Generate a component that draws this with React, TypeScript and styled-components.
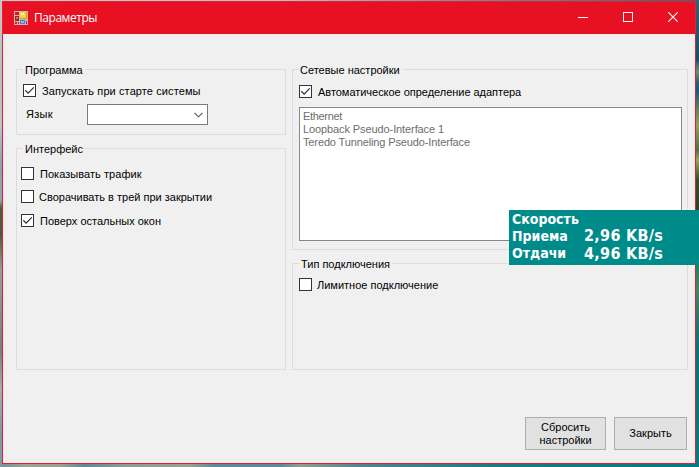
import React from 'react';
import styled, { createGlobalStyle } from 'styled-components';

const GlobalStyle = createGlobalStyle`
  * { box-sizing: border-box; }
  body { margin: 0; overflow: hidden; }
`;

const Desktop = styled.div`
  position: relative;
  width: 699px;
  height: 467px;
  padding: 1px 0 0 2px;
  overflow: hidden;
  font: 11px/13px "Liberation Sans", Arial, sans-serif;
  color: #000;
  background:
    linear-gradient(180deg, #2d6577 0, #12506c 60px, #4a6e75 65px, #6d8a78 72px, #315f6c 82px,
      #155a80 90px, #6a8060 110px, #93a05f 125px, #537048 150px, #9aa35c 160px, #354d2c 180px,
      #28432a 210px, #267f5f 265px, #438568 290px, #237770 320px, #00777c 350px, #007d80 467px)
      100% 0 / 3px 467px no-repeat,
    linear-gradient(180deg, #c3c7c6 0, #b9bec1 80px, #bec4c8 125px, #8e9eb3 165px, #97a4ae 200px,
      #4e5c36 208px, #55573b 235px, #9c9b9b 270px, #777f83 350px, #a8acb3 390px, #7f98a8 430px, #7f9aa5 467px)
      0 0 / 2px 467px no-repeat,
    linear-gradient(90deg, #c7cbca 0, #b9bfbf 280px, #77898a 480px, #386572 699px) 0 0 / 699px 1px no-repeat,
    linear-gradient(90deg, #71929c 0, #9aa493 25px, #9aa391 60px, #5d8a96 85px, #8a9e96 125px,
      #98a290 190px, #5b8b9a 215px, #5b8b9a 280px, #8f9f91 300px, #50858d 360px, #177c80 500px, #007d80 699px)
      0 100% / 699px 3px no-repeat;
`;

const Window = styled.main`
  display: flex;
  flex-direction: column;
  width: 694px;
  height: 463px;
  border: 1px solid #e81f33;
  background: #f0f0f0;
`;

const TitleBar = styled.header`
  display: flex;
  align-items: center;
  flex: none;
  height: 32px;
  padding-left: 11px;
  background: #e81123;
  color: #fff;
`;

const Title = styled.h1`
  margin: 0 auto 0 6px;
  font: 400 12px/16px "Open Sans", "Noto Sans", sans-serif;
  letter-spacing: -0.45px;
`;

const CaptionButton = styled.button`
  display: flex;
  align-items: center;
  justify-content: center;
  width: 45px;
  height: 32px;
  padding: 0 0 2px;
  border: 0;
  background: none;
`;

const Columns = styled.div`
  display: flex;
  gap: 6px;
  padding: 35px 7px 0 13px;
`;

const Column = styled.div<{ $width: number }>`
  display: flex;
  flex-direction: column;
  gap: 13px;
  width: ${p => p.$width}px;
`;

const Group = styled.section<{ $height: number }>`
  height: ${p => p.$height}px;
  border: 1px solid #dcdcdc;
`;

const Legend = styled.h2<{ $width: number; $indent?: number }>`
  width: ${p => p.$width}px;
  height: 13px;
  margin: -6px 0 0 6px;
  padding-left: ${p => p.$indent ?? 2}px;
  background: #f0f0f0;
  font: inherit;
  white-space: nowrap;
`;

const Options = styled.div<{ $top: number; $left: number }>`
  display: flex;
  flex-direction: column;
  gap: 10px;
  padding: ${p => p.$top}px 0 0 ${p => p.$left}px;
`;

const Option = styled.label<{ $gap?: number; $drop?: number; $track?: number }>`
  display: flex;
  gap: ${p => p.$gap ?? 5}px;
  height: 13px;
  margin-top: ${p => p.$drop ?? 0}px;
  line-height: 15px;
  letter-spacing: ${p => p.$track ?? 0}px;
  white-space: nowrap;
`;

const Box = styled.span`
  display: block;
  flex: none;
  width: 13px;
  height: 13px;
  border: 1px solid #333;
  background: #fff;

  svg { display: block; }
`;

const LanguageRow = styled.div`
  display: flex;
  align-items: center;
  height: 21px;
  margin: 7px 0 0 9px;
`;

const LanguageLabel = styled.span`
  width: 61px;
  letter-spacing: 0.3px;
`;

const Combo = styled.div`
  display: flex;
  align-items: center;
  justify-content: flex-end;
  width: 121px;
  height: 21px;
  padding-right: 4px;
  border: 1px solid #7a7a7a;
  background: #fff;
`;

const AdapterList = styled.ul`
  width: 383px;
  height: 134px;
  margin: 9px 0 0 6px;
  padding: 2px 3px;
  border: 1px solid #828790;
  background: #fff;
  color: #6d6d6d;
  list-style: none;
`;

const Adapter = styled.li<{ $track: number }>`
  height: 13px;
  letter-spacing: ${p => p.$track}px;
`;

const Footer = styled.footer`
  display: flex;
  justify-content: flex-end;
  gap: 8px;
  margin: auto 8px 13px 0;
`;

const PushButton = styled.button<{ $width: number }>`
  width: ${p => p.$width}px;
  height: 33px;
  padding: 0;
  border: 1px solid #adadad;
  background: #e1e1e1;
  color: #000;
  font: inherit;
`;

const SpeedOverlay = styled.aside`
  position: absolute;
  left: 509px;
  top: 210px;
  display: flex;
  width: 190px;
  height: 55px;
  padding-left: 3px;
  background: #008b8b;
  color: #fff;
  font: 700 14px/17px "DejaVu Sans Condensed", "DejaVu Sans", sans-serif;
  font-stretch: condensed;
  white-space: nowrap;
`;

const SpeedLabels = styled.div`
  display: flex;
  flex-direction: column;
  width: 72px;
  padding-top: 1px;
`;

const SpeedValues = styled.div`
  display: flex;
  flex-direction: column;
  padding-top: 17px;
  font-size: 16px;
  line-height: 18px;
  letter-spacing: 0.3px;
`;

function AppIcon() {
  return (
    <svg width="14" height="14" viewBox="0 0 14 14" shapeRendering="crispEdges" aria-hidden="true">
      <path fill="#c9b8b0" d="M0 0h14v14H0z" />
      <path fill="#e81123" d="M1 1h4v3H1zM1 11h2v2H1zM4 11h1v2H4zM12 10h1v3h-1z" />
      <path fill="#a3241c" d="M1 5h4v5H1z" />
      <path fill="#d9705f" d="M2 6h2v2H2z" />
      <path fill="#d3a21c" d="M6 1h7v7H6z" />
      <path fill="#f7cf45" d="M6 1h6v6H6z" />
      <path fill="#fff0a0" d="M7 2h3v2H7z" />
      <path fill="#4a80d6" d="M6 9h5v4H6z" />
      <path fill="#89b8ff" d="M7 10h3v2H7z" />
    </svg>
  );
}

interface CheckProps {
  label: string;
  checked?: boolean;
  gap?: number;
  drop?: number;
  track?: number;
}

function Check({ label, checked, gap, drop, track }: CheckProps) {
  return (
    <Option $gap={gap} $drop={drop} $track={track}>
      <Box role="checkbox" aria-checked={!!checked}>
        {checked && (
          <svg width="11" height="11" viewBox="0 0 11 11" aria-hidden="true">
            <path d="M1.3 5.3 4.1 8.1 9.8 2.4" fill="none" stroke="#333" strokeWidth="1.25" />
          </svg>
        )}
      </Box>
      {label}
    </Option>
  );
}

export default function App() {
  return (
    <Desktop>
      <GlobalStyle />
      <Window>
        <TitleBar>
          <AppIcon />
          <Title>Параметры</Title>
          <CaptionButton aria-label="Свернуть">
            <svg width="10" height="10" shapeRendering="crispEdges"><path d="M0 5.5h10" stroke="#fff" /></svg>
          </CaptionButton>
          <CaptionButton aria-label="Развернуть">
            <svg width="10" height="10" shapeRendering="crispEdges">
              <path d="M.5.5h9v9h-9z" fill="none" stroke="#fff" />
            </svg>
          </CaptionButton>
          <CaptionButton aria-label="Закрыть">
            <svg width="10" height="10"><path d="M.3.3l9.4 9.4M9.7.3.3 9.7" stroke="#fff" strokeWidth="1.1" /></svg>
          </CaptionButton>
        </TitleBar>
        <Columns>
          <Column $width={270}>
            <Group $height={66}>
              <Legend $width={63}>Программа</Legend>
              <Options $top={7} $left={6}>
                <Check checked gap={6} track={0.1} label="Запускать при старте системы" />
              </Options>
              <LanguageRow>
                <LanguageLabel>Язык</LanguageLabel>
                <Combo role="combobox">
                  <svg width="9" height="6" viewBox="0 0 9 6">
                    <path d="M.5.8 4.5 4.8 8.5.8" fill="none" stroke="#555" strokeWidth="1.1" />
                  </svg>
                </Combo>
              </LanguageRow>
            </Group>
            <Group $height={222}>
              <Legend $width={61}>Интерфейс</Legend>
              <Options $top={11} $left={4}>
                <Check gap={6} track={0.05} label="Показывать трафик" />
                <Check label="Сворачивать в трей при закрытии" />
                <Check checked drop={1} gap={6} label="Поверх остальных окон" />
              </Options>
            </Group>
          </Column>
          <Column $width={396}>
            <Group $height={181}>
              <Legend $width={104} $indent={1}>Сетевые настройки</Legend>
              <Options $top={8} $left={6}>
                <Check checked gap={6} track={-0.03} label="Автоматическое определение адаптера" />
              </Options>
              <AdapterList>
                <Adapter $track={-0.33}>Ethernet</Adapter>
                <Adapter $track={-0.1}>Loopback Pseudo-Interface 1</Adapter>
                <Adapter $track={-0.13}>Teredo Tunneling Pseudo-Interface</Adapter>
              </AdapterList>
            </Group>
            <Group $height={107}>
              <Legend $width={93}>Тип подключения</Legend>
              <Options $top={7} $left={6}>
                <Check label="Лимитное подключение" />
              </Options>
            </Group>
          </Column>
        </Columns>
        <Footer>
          <PushButton $width={81}>Сбросить<br />настройки</PushButton>
          <PushButton $width={73}>Закрыть</PushButton>
        </Footer>
      </Window>
      <SpeedOverlay>
        <SpeedLabels>
          <span>Скорость</span>
          <span>Приема</span>
          <span>Отдачи</span>
        </SpeedLabels>
        <SpeedValues>
          <span>2,96 KB/s</span>
          <span>4,96 KB/s</span>
        </SpeedValues>
      </SpeedOverlay>
    </Desktop>
  );
}
